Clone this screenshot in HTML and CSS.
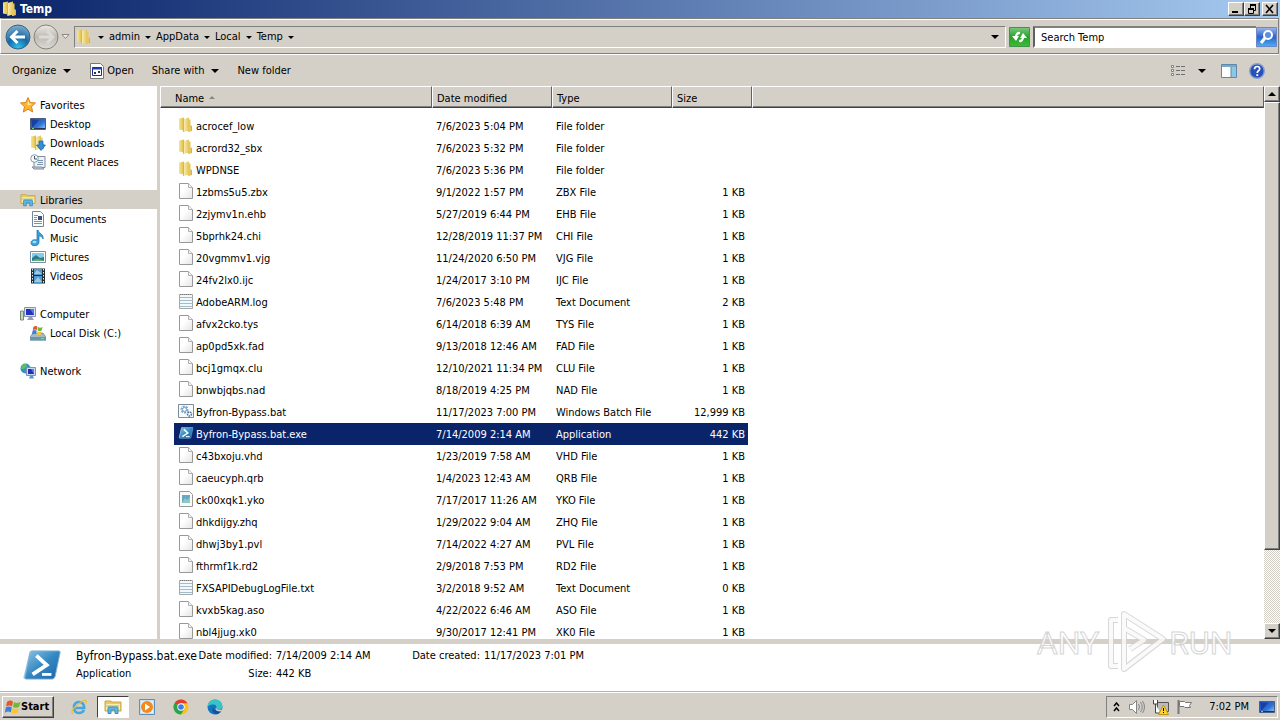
FILE: index.html
```html
<!DOCTYPE html>
<html lang="en">
<head>
    <meta charset="UTF-8">
    <meta name="viewport" content="width=device-width, initial-scale=1.0">
    <title>Temp</title>
    <link rel="stylesheet" href="styles.css">
</head>
<body>
    <!-- shared icons -->
    <svg class="sprite" width="0" height="0">
        <defs>
            <linearGradient id="gold" x1="0" x2="1"><stop offset="0" stop-color="#f6e58f"/><stop offset="1" stop-color="#e0bb4a"/></linearGradient>
            <linearGradient id="goldFront" x1="0" x2="1"><stop offset="0" stop-color="#fbf0b4"/><stop offset="1" stop-color="#e3c257"/></linearGradient>
            <linearGradient id="paper" x1="0" y1="0" x2="1" y2="1"><stop offset="0.4" stop-color="#fff"/><stop offset="1" stop-color="#e4e4e4"/></linearGradient>
            <linearGradient id="screen" x1="0" y1="0" x2="1" y2="1"><stop offset="0" stop-color="#1a3fae"/><stop offset="0.6" stop-color="#2f74d8"/><stop offset="1" stop-color="#9cd4f5"/></linearGradient>
            <linearGradient id="shell" x1="0" y1="0" x2="1" y2="1"><stop offset="0" stop-color="#8fc6e6"/><stop offset="0.5" stop-color="#3488c2"/><stop offset="1" stop-color="#1c66a8"/></linearGradient>
            <linearGradient id="green" x1="0" y1="0" x2="0" y2="1"><stop offset="0" stop-color="#7cc87c"/><stop offset="0.5" stop-color="#26a12c"/><stop offset="1" stop-color="#3fbd35"/></linearGradient>
            <linearGradient id="blue" x1="0" y1="0" x2="0" y2="1"><stop offset="0" stop-color="#9fb6e8"/><stop offset="0.5" stop-color="#2c62d0"/><stop offset="1" stop-color="#45b4f2"/></linearGradient>
            <radialGradient id="backBall" cx="0.5" cy="0.95" r="0.9"><stop offset="0" stop-color="#33c3ea"/><stop offset="0.5" stop-color="#1469a8"/><stop offset="1" stop-color="#7aa7c9"/></radialGradient>
            <linearGradient id="forwardBall" x1="0" y1="0" x2="0" y2="1"><stop offset="0" stop-color="#eceae6"/><stop offset="0.5" stop-color="#bdbab4"/><stop offset="1" stop-color="#dedbd5"/></linearGradient>
        </defs>
        <symbol id="folder" viewBox="0 0 16 16">
            <path d="M1 1.500l5-1v13l-5-1z" fill="url(#gold)"/>
            <path d="M10 2.500h2.500V8l1.500 1v5l-3 1h-1z" fill="#e6c75f"/>
            <path d="M5.500 2L11 .5v13L5.500 15z" fill="url(#goldFront)"/>
            <path d="M5.500 2v13M13.500 9v5" stroke="#d3ac40" stroke-width=".8"/>
        </symbol>
        <symbol id="file" viewBox="0 0 16 16">
            <path d="M1.500.5h9l4 4v11h-13z" fill="url(#paper)" stroke="#989898"/>
            <path d="M10.500.5v4h4" fill="#f4f4f4" stroke="#b0b0b0"/>
        </symbol>
        <symbol id="text" viewBox="0 0 16 16">
            <path d="M1.500 1.500h13v14h-13z" fill="#f4f8fa" stroke="#a4a9ac"/>
            <path d="M2 4.500h12M2 7.500h12M2 10.500h12M2 13.500h12" stroke="#a3bccb"/>
            <path d="M2 1.500h12" stroke="#777" stroke-dasharray="1 1"/>
        </symbol>
        <symbol id="batch" viewBox="0 0 16 16">
            <path d="M.5 1.500h15v13H.5z" fill="#f8fbfd" stroke="#7d8b99"/>
            <circle cx="6.500" cy="6.500" r="3" fill="none" stroke="#7ba6c8" stroke-width="2" stroke-dasharray="2 1"/>
            <circle cx="6.500" cy="6.500" r="2" fill="#fff" stroke="#6ba0c6"/>
            <circle cx="11.500" cy="11" r="2" fill="#fff" stroke="#476f97" stroke-width="1.500" stroke-dasharray="1.500 .7"/>
        </symbol>
        <symbol id="image-file" viewBox="0 0 16 16">
            <path d="M1.500.5h10l3 3v12h-13z" fill="#fafafa" stroke="#989898"/>
            <path d="M4 4h8v8H4z" fill="#68a8c0"/>
            <path d="M4 12l3-5 2 2 3-3v6z" fill="#8bc9c2"/>
        </symbol>
        <symbol id="powershell" viewBox="0 0 44 34">
            <path d="M9 2h32l-7 29H2z" fill="#a9cde3"/>
            <path d="M11 2h29q2 0 1 3l-5 24q-1 3-3 3H5q-2 0-1-3l5-24q1-3 2-3z" fill="url(#shell)" stroke="#84b4d2"/>
            <path d="M16 7l11 10-15 10" fill="none" stroke="#fff" stroke-width="4"/>
            <path d="M22 27h10" stroke="#fff" stroke-width="3"/>
        </symbol>
        <symbol id="star" viewBox="0 0 16 16">
            <path d="M8 .5l2.200 5 5.300.5-4 3.600 1.200 5.400L8 12.200 3.300 15l1.200-5.400L.5 6l5.300-.5z" fill="#ffb52a" stroke="#d98222"/>
            <path d="M8 3l1.200 3.500 3.300.4-5 1.600z" fill="#ffe9a0"/>
        </symbol>
        <symbol id="desktop" viewBox="0 0 16 16">
            <path d="M.5 2.500h15v11H.5z" fill="url(#screen)" stroke="#4c5d80"/>
            <path d="M2 4h7L3 11H2z" fill="#1c3e9e"/>
            <path d="M1 12.500h14" stroke="#26354f"/>
            <path d="M2 12.500h2" stroke="#72d36b"/>
        </symbol>
        <symbol id="download" viewBox="0 0 16 16">
            <use href="#folder"/>
            <path d="M9 6h4v4h2.500L11 15.500 6.500 10H9z" fill="#2e8ee0" stroke="#1761aa" stroke-width=".7"/>
        </symbol>
        <symbol id="recent" viewBox="0 0 16 16">
            <path d="M5 2.500h10v11H4V6" fill="#eef2f6" stroke="#7f8b98"/>
            <path d="M2 13h10l2 2H4z" fill="#c7d0da" stroke="#7f8b98"/>
            <path d="M8 6.500h5M8 8.500h5M7 10.500h6" stroke="#7995b2"/>
            <circle cx="4.500" cy="4.500" r="3.800" fill="#f5fafd" stroke="#7e9db8"/>
            <path d="M4.500 2v3H7" fill="none" stroke="#456"/>
        </symbol>
        <symbol id="libraries" viewBox="0 0 18 16">
            <path d="M1 4V2h6l1 1h9v9H1z" fill="#e8cb65" stroke="#cda544"/>
            <path d="M2 5h14v6H2z" fill="#fbefae"/>
            <path d="M2 7h13" stroke="#90bd76"/>
            <path d="M4 14.500V9q0-1 1-1h8q1 0 1 1v5.500h-3V11H7v3.500z" fill="#62b6e6" stroke="#3a8fc4"/>
        </symbol>
        <symbol id="document" viewBox="0 0 16 16">
            <path d="M2.500.5h8l3 3v12h-11z" fill="#fff" stroke="#73879b"/>
            <path d="M4 4.500h4M4 6.500h3M4 8.500h3M4 10.500h8M4 12.500h8" stroke="#7196b7"/>
            <path d="M8 5h4v4H8z" fill="#31567a"/>
        </symbol>
        <symbol id="music" viewBox="0 0 16 16">
            <path d="M8 0c1 4 6 4 5 9-1-3-3-3-4-3v6c0 5-8 5-8 1 0-3 3-4 6-3V0z" fill="#36a2dd" stroke="#1c6ea9" stroke-width=".7"/>
            <ellipse cx="4.500" cy="12" rx="2" ry="1.300" fill="#a0def9"/>
        </symbol>
        <symbol id="picture" viewBox="0 0 16 16">
            <path d="M.5 2.500h15v11H.5z" fill="#fff" stroke="#7290a8"/>
            <path d="M2 4h12v8H2z" fill="#86cbe8"/>
            <path d="M2 9l4-3 4 3 4-1v4H2z" fill="#2c7c8c"/>
            <path d="M2 12c4-3 8-2 12 0z" fill="#6cae68"/>
        </symbol>
        <symbol id="video" viewBox="0 0 16 16">
            <path d="M1 .5h14v15H1z" fill="#222c33"/>
            <path d="M4 1h8v6H4zM4 8h8v7H4z" fill="#4e9cd2"/>
            <path d="M4 6l3-4 5 4zM4 14l4-5 4 5z" fill="#a4c7d9"/>
            <path d="M2.500 1v14M13.500 1v14" stroke="#eee" stroke-dasharray="1.500 1.500"/>
        </symbol>
        <symbol id="computer" viewBox="0 0 16 16">
            <path d="M.5 5h3v9h-3z" fill="#c9d5bb" stroke="#738a70"/>
            <path d="M4.500 1.500h11v9h-11z" fill="#dce1eb" stroke="#8892ad"/>
            <path d="M6 3h8v6H6z" fill="#2132bd"/>
            <path d="M10 3h4v6z" fill="#4d7ee8"/>
            <path d="M9 11h3l2 3H7z" fill="#939fb0"/>
        </symbol>
        <symbol id="winflag" viewBox="0 0 16 16">
            <path d="M2 3c2-2 4-2 6-.5L7 7.500c-2-1.500-4-1-6 0z" fill="#e8562a"/>
            <path d="M9 3c2 1.500 4 1 6.500 0L14 8c-2 1-4 1-6 0z" fill="#6eb83b"/>
            <path d="M.8 8.500c2-1.500 4-1.500 6 0l-1 5c-2-1.500-4-1-6 .5z" fill="#3a80d8"/>
            <path d="M7.700 9c2 1.500 4 1 6 0l-1.200 5c-2 1-4 1-6-.5z" fill="#fcc52b"/>
        </symbol>
        <symbol id="disk" viewBox="0 0 16 16">
            <path d="M3 8h10l3 4v3H0v-3z" fill="#a8b9c2" stroke="#6f8490" stroke-width=".7"/>
            <path d="M0 12h16v3.500H0z" fill="#6698ad"/>
            <path d="M11 13.500h3" stroke="#7fe474"/>
            <use href="#winflag" x="2" y="0" width="11" height="11"/>
        </symbol>
        <symbol id="network" viewBox="0 0 16 16">
            <circle cx="5.500" cy="5.500" r="5" fill="#2c93c5"/>
            <path d="M2 2c3-2 5-1 5 1L4 6 1 6zM5 8l3-1v3z" fill="#64bd60"/>
            <path d="M6.500 4.500h9v8h-9z" fill="#cdd6ea" stroke="#8190b0"/>
            <path d="M8 6h6v5H8z" fill="#1c31bd"/>
            <path d="M11 6h3v5z" fill="#4d82ec"/>
            <path d="M10 13h3l1 2.500H9z" fill="#5b95cf"/>
        </symbol>
    </svg>

    <header class="titlebar">
        <svg class="icon"><use href="#folder"/></svg>
        <h1>Temp</h1>
        <div class="window-buttons">
            <button aria-label="Minimize"><svg width="12" height="10"><path d="M2 8h6" stroke="#000" stroke-width="2"/></svg></button>
            <button aria-label="Restore"><svg width="12" height="10"><path d="M4 1h6M2 5h6" stroke="#000" stroke-width="2"/><path d="M4.500 2v2M9.500 2v4.500H8M2.500 5v4.500h5V5" fill="none" stroke="#000"/></svg></button>
            <button class="close" aria-label="Close"><svg width="12" height="10"><path d="M2 1l7 8M9 1L2 9" stroke="#000" stroke-width="1.600"/></svg></button>
        </div>
    </header>

    <nav class="address-row">
        <button class="round" aria-label="Back"><svg width="26" height="26"><circle cx="13" cy="13" r="12" fill="url(#backBall)" stroke="#31658c"/><path d="M20 13H7M12.500 7l-6 6 6 6" fill="none" stroke="#fff" stroke-width="3"/></svg></button>
        <button class="round" aria-label="Forward"><svg width="26" height="26"><circle cx="13" cy="13" r="12" fill="url(#forwardBall)" stroke="#85827c"/><path d="M6 13h13M14 7l6 6-6 6" fill="none" stroke="#dddad5" stroke-width="3"/></svg></button>
        <button class="history" aria-label="Recent pages"><svg width="9" height="6"><path d="M1 .5h7L4.500 4.500z" fill="#eee" stroke="#8b8881"/></svg></button>
        <div class="address">
            <svg class="icon"><use href="#folder"/></svg>
            <i class="arrow"></i>
            <a href="#">admin</a><i class="arrow"></i>
            <a href="#">AppData</a><i class="arrow"></i>
            <a href="#">Local</a><i class="arrow"></i>
            <a href="#">Temp</a><i class="arrow"></i>
            <i class="arrow big last"></i>
        </div>
        <button class="square" aria-label="Refresh"><svg width="21" height="20"><path d="M.5.5h20v19H.5z" fill="url(#green)" stroke="#45904a"/><path d="M11 5q-4-1-5 4H3l4 5 3-5H8q1-2 3-2zM10 15q4 1 5-4h3l-4-5-3 5h2q-1 2-3 2z" fill="#fff"/></svg></button>
        <div class="search">
            <input type="text" aria-label="Search Temp" placeholder="Search Temp">
            <button class="square" aria-label="Search"><svg width="21" height="20"><path d="M.5.5h20v19H.5z" fill="url(#blue)" stroke="#6c87c7"/><circle cx="12" cy="8" r="4" fill="#5c8fe0" stroke="#fff" stroke-width="2"/><path d="M9 11l-4 5" stroke="#fff" stroke-width="3"/></svg></button>
        </div>
    </nav>

    <div class="toolbar">
        <button class="menu">Organize <i class="arrow big"></i></button>
        <button class="open"><svg class="icon" viewBox="0 0 16 16"><path d="M1.500.5h10l3 3v12h-13z" fill="#fff" stroke="#777"/><path d="M3.500 4.500h9v8h-9z" fill="#fff" stroke="#1c2f80"/><path d="M3 5.500h10" stroke="#1c3fae" stroke-width="2"/><path d="M5 9h2v2H5zM9 8h2v2H9z" fill="#335"/></svg>Open</button>
        <button class="menu">Share with <i class="arrow big"></i></button>
        <button>New folder</button>
        <div class="toolbar-right">
            <button class="menu" aria-label="Change your view"><svg class="icon" viewBox="0 0 16 16"><path d="M1.500 2.500h2v2h-2zM1.500 6.500h2v2h-2zM1.500 10.500h2v2h-2z" fill="#fff" stroke="#808080"/><path d="M6 3.500h10M6 7.500h10M6 11.500h10" stroke="#6f6f6f" stroke-dasharray="4 1"/></svg><i class="arrow big"></i></button>
            <button aria-label="Show the preview pane"><svg class="icon" viewBox="0 0 16 16"><path d="M.5 1.500h15v13H.5z" fill="#fff" stroke="#5e88a6"/><path d="M1 3h14" stroke="#79a9c9" stroke-width="2"/><path d="M10 4h5v10h-5z" fill="#8cc8e6"/><path d="M10 4v10" stroke="#5e88a6"/></svg></button>
            <button aria-label="Get help"><svg class="icon" viewBox="0 0 16 16"><circle cx="8" cy="8" r="7.300" fill="#2750b8" stroke="#8aa0cd" stroke-width="1.400"/><path d="M5.500 6.200q0-2.700 2.600-2.700t2.600 2.300q0 1.200-1.200 2T8.200 10" fill="none" stroke="#fff" stroke-width="1.700"/><path d="M7.300 11.200h1.900V13H7.300z" fill="#fff"/></svg></button>
        </div>
    </div>

    <main class="explorer">
        <aside class="sidebar">
            <ul>
                <li><svg class="icon"><use href="#star"/></svg><a href="#">Favorites</a></li>
                <li class="sub"><svg class="icon"><use href="#desktop"/></svg><a href="#">Desktop</a></li>
                <li class="sub"><svg class="icon"><use href="#download"/></svg><a href="#">Downloads</a></li>
                <li class="sub"><svg class="icon"><use href="#recent"/></svg><a href="#">Recent Places</a></li>
            </ul>
            <ul>
                <li class="current"><svg class="icon"><use href="#libraries"/></svg><a href="#">Libraries</a></li>
                <li class="sub"><svg class="icon"><use href="#document"/></svg><a href="#">Documents</a></li>
                <li class="sub"><svg class="icon"><use href="#music"/></svg><a href="#">Music</a></li>
                <li class="sub"><svg class="icon"><use href="#picture"/></svg><a href="#">Pictures</a></li>
                <li class="sub"><svg class="icon"><use href="#video"/></svg><a href="#">Videos</a></li>
            </ul>
            <ul>
                <li><svg class="icon"><use href="#computer"/></svg><a href="#">Computer</a></li>
                <li class="sub"><svg class="icon"><use href="#disk"/></svg><a href="#">Local Disk (C:)</a></li>
            </ul>
            <ul>
                <li><svg class="icon"><use href="#network"/></svg><a href="#">Network</a></li>
            </ul>
        </aside>

        <section class="files">
            <table>
                <thead>
                    <tr><th class="name">Name <i class="sort"></i></th><th class="date">Date modified</th><th class="type">Type</th><th class="size">Size</th><th></th></tr>
                </thead>
                <tbody>
                    <tr><td><svg class="icon"><use href="#folder"/></svg>acrocef_low</td><td>7/6/2023 5:04 PM</td><td>File folder</td><td></td></tr>
                    <tr><td><svg class="icon"><use href="#folder"/></svg>acrord32_sbx</td><td>7/6/2023 5:32 PM</td><td>File folder</td><td></td></tr>
                    <tr><td><svg class="icon"><use href="#folder"/></svg>WPDNSE</td><td>7/6/2023 5:36 PM</td><td>File folder</td><td></td></tr>
                    <tr><td><svg class="icon"><use href="#file"/></svg>1zbms5u5.zbx</td><td>9/1/2022 1:57 PM</td><td>ZBX File</td><td>1 KB</td></tr>
                    <tr><td><svg class="icon"><use href="#file"/></svg>2zjymv1n.ehb</td><td>5/27/2019 6:44 PM</td><td>EHB File</td><td>1 KB</td></tr>
                    <tr><td><svg class="icon"><use href="#file"/></svg>5bprhk24.chi</td><td>12/28/2019 11:37 PM</td><td>CHI File</td><td>1 KB</td></tr>
                    <tr><td><svg class="icon"><use href="#file"/></svg>20vgmmv1.vjg</td><td>11/24/2020 6:50 PM</td><td>VJG File</td><td>1 KB</td></tr>
                    <tr><td><svg class="icon"><use href="#file"/></svg>24fv2lx0.ijc</td><td>1/24/2017 3:10 PM</td><td>IJC File</td><td>1 KB</td></tr>
                    <tr><td><svg class="icon"><use href="#text"/></svg>AdobeARM.log</td><td>7/6/2023 5:48 PM</td><td>Text Document</td><td>2 KB</td></tr>
                    <tr><td><svg class="icon"><use href="#file"/></svg>afvx2cko.tys</td><td>6/14/2018 6:39 AM</td><td>TYS File</td><td>1 KB</td></tr>
                    <tr><td><svg class="icon"><use href="#file"/></svg>ap0pd5xk.fad</td><td>9/13/2018 12:46 AM</td><td>FAD File</td><td>1 KB</td></tr>
                    <tr><td><svg class="icon"><use href="#file"/></svg>bcj1gmqx.clu</td><td>12/10/2021 11:34 PM</td><td>CLU File</td><td>1 KB</td></tr>
                    <tr><td><svg class="icon"><use href="#file"/></svg>bnwbjqbs.nad</td><td>8/18/2019 4:25 PM</td><td>NAD File</td><td>1 KB</td></tr>
                    <tr><td><svg class="icon"><use href="#batch"/></svg>Byfron-Bypass.bat</td><td>11/17/2023 7:00 PM</td><td>Windows Batch File</td><td>12,999 KB</td></tr>
                    <tr class="selected"><td><svg class="icon"><use href="#powershell"/></svg>Byfron-Bypass.bat.exe</td><td>7/14/2009 2:14 AM</td><td>Application</td><td>442 KB</td></tr>
                    <tr><td><svg class="icon"><use href="#file"/></svg>c43bxoju.vhd</td><td>1/23/2019 7:58 AM</td><td>VHD File</td><td>1 KB</td></tr>
                    <tr><td><svg class="icon"><use href="#file"/></svg>caeucyph.qrb</td><td>1/4/2023 12:43 AM</td><td>QRB File</td><td>1 KB</td></tr>
                    <tr><td><svg class="icon"><use href="#image-file"/></svg>ck00xqk1.yko</td><td>7/17/2017 11:26 AM</td><td>YKO File</td><td>1 KB</td></tr>
                    <tr><td><svg class="icon"><use href="#file"/></svg>dhkdijgy.zhq</td><td>1/29/2022 9:04 AM</td><td>ZHQ File</td><td>1 KB</td></tr>
                    <tr><td><svg class="icon"><use href="#file"/></svg>dhwj3by1.pvl</td><td>7/14/2022 4:27 AM</td><td>PVL File</td><td>1 KB</td></tr>
                    <tr><td><svg class="icon"><use href="#file"/></svg>fthrmf1k.rd2</td><td>2/9/2018 7:53 PM</td><td>RD2 File</td><td>1 KB</td></tr>
                    <tr><td><svg class="icon"><use href="#text"/></svg>FXSAPIDebugLogFile.txt</td><td>3/2/2018 9:52 AM</td><td>Text Document</td><td>0 KB</td></tr>
                    <tr><td><svg class="icon"><use href="#file"/></svg>kvxb5kag.aso</td><td>4/22/2022 6:46 AM</td><td>ASO File</td><td>1 KB</td></tr>
                    <tr><td><svg class="icon"><use href="#file"/></svg>nbl4jjug.xk0</td><td>9/30/2017 12:41 PM</td><td>XK0 File</td><td>1 KB</td></tr>
                </tbody>
            </table>
        </section>

        <div class="scrollbar">
            <button aria-label="Scroll up"><i class="arrow big up"></i></button>
            <div class="thumb"></div>
            <div class="track"></div>
            <button aria-label="Scroll down"><i class="arrow big"></i></button>
        </div>
    </main>

    <footer class="details">
        <svg class="preview"><use href="#powershell"/></svg>
        <div class="facts">
            <strong>Byfron-Bypass.bat.exe</strong><span class="label">Date modified:</span><span>7/14/2009 2:14 AM</span><span class="label">Date created:</span><span>11/17/2023 7:01 PM</span>
            <span>Application</span><span class="label">Size:</span><span>442 KB</span>
        </div>
        <svg class="watermark" width="210" height="80" viewBox="0 0 210 80">
            <g fill="#fff" stroke="#cfcfcf">
                <text x="38" y="53" text-anchor="middle">ANY</text>
                <text x="171" y="53" text-anchor="middle">RUN</text>
            </g>
            <g fill="none" stroke-linejoin="round">
                <path d="M88 19h-7v46h7M94 13l39 25-39 30zM94 68V27l20 12-14 9" stroke="#d2d2d2" stroke-width="6"/>
                <path d="M88 19h-7v46h7M94 13l39 25-39 30zM94 68V27l20 12-14 9" stroke="#fafafa" stroke-width="4"/>
            </g>
        </svg>
    </footer>

    <div class="taskbar">
        <button class="start"><svg class="icon"><use href="#winflag"/></svg>Start</button>
        <div class="apps">
            <button aria-label="Internet Explorer"><svg class="icon" viewBox="0 0 16 16"><path d="M13 11q-1.500 3-5 3-5 0-5-5.500T8 3q5 0 5.200 6H4.500" fill="none" stroke="#43a7e2" stroke-width="2.600"/><path d="M2 15q-3-2 2-7t9-6.500q3-1 2 2.500" fill="none" stroke="#eebb3a" stroke-width="1.300"/></svg></button>
            <button class="active" aria-label="Windows Explorer"><svg class="icon"><use href="#libraries"/></svg></button>
            <button aria-label="Windows Media Player"><svg class="icon" viewBox="0 0 16 16"><path d="M.5.5h15v15H.5z" fill="#c6e1f3" stroke="#5d91bd"/><path d="M2 2h12v12H2z" fill="#e4effa"/><circle cx="8" cy="8" r="6" fill="#f28a1e"/><path d="M6 4.500l5 3.500-5 3.500z" fill="#fff"/></svg></button>
            <button aria-label="Google Chrome"><svg class="icon" viewBox="0 0 16 16"><circle cx="8" cy="8" r="7.500" fill="#fbc116"/><path d="M8 8L1.500 4.200A7.500 7.500 0 0 1 14.500 4.300H8z" fill="#e33b2e"/><path d="M8 8L1.500 4.200A7.500 7.500 0 0 0 8 15.500l3.200-5.600z" fill="#2ba24c"/><circle cx="8" cy="8" r="3.700" fill="#fff"/><circle cx="8" cy="8" r="2.800" fill="#3b7ded"/></svg></button>
            <button aria-label="Microsoft Edge"><svg class="icon" viewBox="0 0 16 16"><circle cx="8" cy="8" r="7.500" fill="#1473c4"/><path d="M.5 8Q1 .5 8 .5t7.500 7q0 3-4 3-3 0-2-2 0-3-3-3Q2 5 .5 8z" fill="#38c3c5"/><path d="M6 8q-2 5 3 7.300Q13 15 14.800 11 8 14 6 8z" fill="#174f9c"/><path d="M9.500 8.500q-1 3 5 2l1 1-2 1q-5 0-5-3z" fill="#d4d0c8"/></svg></button>
        </div>
        <div class="tray">
            <button aria-label="Show hidden icons"><svg width="8" height="10"><path d="M1 4l2.500-3L6 4M1 9l2.500-3L6 9" fill="none" stroke="#000" stroke-width="1.500"/></svg></button>
            <svg class="icon" viewBox="0 0 16 16"><path d="M.5 5.500h3l4-4v13l-4-4h-3z" fill="#fff" stroke="#858585"/><path d="M9.500 5q2 3 0 6M11.500 3q3.500 5 0 10M13.500 2q4 6 0 12" fill="none" stroke="#858585"/></svg>
            <svg class="icon" viewBox="0 0 16 16"><path d="M4.500 3.500h11v9h-11z" fill="#bbb" stroke="#555"/><path d="M.5 1v4h4V1M2.500 5v9h5" fill="#fff" stroke="#444"/><path d="M10.500 6l5 9.500h-10z" fill="#ffd52c" stroke="#bd971b"/><path d="M10.500 9v3M10.500 13v1" stroke="#000"/></svg>
            <svg class="icon" viewBox="0 0 16 16"><path d="M1.500 1v14" stroke="#777" stroke-width="2"/><path d="M2.500 2.500h5l1 1h6l-2 3 1 2H8l-1-1H2.500z" fill="#fff" stroke="#777"/></svg>
            <time>7:02 PM</time>
            <svg class="icon"><use href="#desktop"/></svg>
        </div>
    </div>
</body>
</html>
```
FILE: styles.css
```css
*{
  box-sizing: border-box;
}
body{
  margin: 0;
  height: 100vh;
  display: flex;
  flex-direction: column;
  overflow: hidden;
  background: #d4d0c8;
  color: #000;
  font: 11px/14px "DejaVu Sans Condensed", Tahoma, sans-serif;
}
.sprite{
  position: absolute;
}
button{
  font: inherit;
  color: inherit;
  background: none;
  border: none;
  padding: 0;
  display: flex;
  align-items: center;
}
a{
  color: inherit;
  text-decoration: none;
}
ul{
  list-style: none;
  margin: 0;
  padding: 0;
}
.icon{
  width: 16px;
  height: 16px;
  flex: none;
}
.arrow{
  border: 3px solid transparent;
  border-top-color: #000;
  border-bottom: none;
}
.arrow.big{
  border-width: 4px;
  border-bottom: none;
}
.arrow.up{
  border: 4px solid transparent;
  border-top: none;
  border-bottom-color: #000;
}

/* title */
.titlebar{
  display: flex;
  align-items: center;
  gap: 2px;
  height: 18px;
  padding: 0 2px;
  background: linear-gradient(to right, #0a246a, #a6caf0);
  color: #fff;
}
.titlebar h1{
  margin: 0;
  font-size: 12px;
}
.window-buttons{
  display: flex;
  margin-left: auto;
}
.window-buttons button, .scrollbar button, .thumb, .start{
  background: #d4d0c8;
  border: 1px solid;
  border-color: #fff #404040 #404040 #fff;
  box-shadow: inset -1px -1px #808080;
  justify-content: center;
}
.window-buttons button{
  width: 16px;
  height: 14px;
}
.window-buttons .close{
  margin-left: 2px;
}

/* address */
.address-row{
  display: flex;
  align-items: center;
  height: 36px;
  margin-right: 1px;
  padding: 2px 1px 0 4px;
  border: 1px solid #808080;
  border-left-color: #fff;
  box-shadow: inset 0 1px #fff, 0 1px #fff;
}
.round{
  margin-right: 2px;
}
.history{
  margin-right: 4px;
}
.address{
  flex: 1;
  display: flex;
  align-items: center;
  gap: 5px;
  height: 22px;
  padding: 0 6px 0 1px;
  border: 1px solid #808080;
  border-color: #808080 #fff #fff #808080;
}
.address .icon{
  margin-right: 1px;
}
.address .last{
  margin-left: auto;
}
.square{
  margin: 0 3px;
}
.search{
  display: flex;
  align-items: center;
  width: 244px;
}
.search input{
  flex: 1;
  min-width: 0;
  height: 22px;
  padding: 0 6px;
  border: 2px solid;
  border-color: #808080 #fff #fff #606060;
  border-right: none;
  border-radius: 0;
  background: #fff;
  font: inherit;
}
.search input::placeholder{
  color: #000;
}
.search .square{
  margin: 0;
}

/* commands */
.toolbar{
  display: flex;
  align-items: center;
  gap: 18px;
  height: 32px;
  padding: 1px 15px 0 12px;
}
.toolbar .menu{
  gap: 7px;
}
.open{
  gap: 2px;
}
.toolbar-right{
  display: flex;
  align-items: center;
  gap: 12px;
  margin-left: auto;
}
.toolbar-right .menu{
  gap: 12px;
}
.toolbar-right .menu + button{
  margin-left: 3px;
}

/* panes */
.explorer{
  flex: 1;
  min-height: 0;
  display: flex;
}
.sidebar{
  width: 160px;
  padding-top: 9px;
  background: #fff;
  border-right: 3px solid #d4d0c8;
}
.sidebar ul{
  margin-bottom: 19px;
}
.sidebar li{
  display: flex;
  align-items: center;
  gap: 4px;
  height: 19px;
  padding-left: 20px;
}
.sidebar .sub{
  padding-left: 30px;
}
.sidebar a{
  padding-top: 2px;
}
.current{
  background: #d4d0c8;
}
.files{
  flex: 1;
  overflow: hidden;
  background: #fff;
}
table{
  width: 100%;
  table-layout: fixed;
  border-spacing: 0;
}
th{
  height: 22px;
  padding: 3px 4px 0;
  background: #d4d0c8;
  border: 1px solid;
  border-color: #fff #606060 #404040 #fff;
  box-shadow: inset 0 -1px #808080;
  font-weight: normal;
  text-align: left;
}
.name{
  width: 272px;
  padding-left: 14px;
}
.date, .type{
  width: 120px;
}
.size{
  width: 80px;
}
.sort{
  display: inline-block;
  margin-left: 2px;
  border: 3px solid transparent;
  border-top: none;
  border-bottom-color: #8a877f;
  vertical-align: 3px;
}
tbody::before{
  content: "";
  display: table-row;
  height: 7px;
}
td{
  height: 22px;
  padding: 2px 4px 0;
  vertical-align: baseline;
  white-space: nowrap;
}
td:first-child{
  border-left: 14px solid #fff;
}
td .icon{
  margin-right: 2px;
  vertical-align: -3px;
}
td:nth-child(4){
  padding-right: 3px;
  border-right: 4px solid #fff;
  text-align: right;
}
.selected td{
  background: #0a246a;
  color: #fff;
}
.scrollbar{
  display: flex;
  flex-direction: column;
  width: 16px;
}
.scrollbar button{
  height: 16px;
}
.thumb{
  flex: 448;
}
.track{
  flex: 73;
  background: repeating-conic-gradient(#fff 0 25%, #d4d0c8 0 50%) 0 0 / 2px 2px;
}

/* details */
.details{
  position: relative;
  display: flex;
  align-items: flex-start;
  gap: 12px;
  height: 53px;
  padding: 5px 20px;
  background: #fff;
  border-top: 5px solid #d4d0c8;
  border-bottom: 1px solid #b8b5ae;
}
.preview{
  width: 44px;
  height: 32px;
}
.facts{
  display: grid;
  grid-template-columns: 122px 78px 132px 76px auto;
  row-gap: 4px;
  white-space: nowrap;
}
.facts strong{
  font-size: 12px;
  font-weight: normal;
}
.label{
  padding-right: 4px;
  text-align: right;
}
.watermark{
  position: absolute;
  right: 40px;
  bottom: 10px;
  font: 32px Roboto, sans-serif;
  opacity: 0.85;
}

/* taskbar */
.taskbar{
  display: flex;
  align-items: center;
  height: 28px;
  padding: 2px;
  border-top: 1px solid #fff;
}
.start{
  height: 22px;
  padding: 0 4px 0 2px;
  font-weight: bold;
}
.apps{
  display: flex;
  gap: 2px;
  margin-left: 9px;
}
.apps button{
  width: 32px;
  height: 22px;
  justify-content: center;
}
.apps .active{
  background: #fff;
  border: 1px solid;
  border-color: #404040 #fff #fff #404040;
}
.apps .active .icon{
  width: 18px;
}
.tray{
  display: flex;
  align-items: center;
  gap: 8px;
  height: 22px;
  margin-left: auto;
  padding: 0 2px 0 6px;
  border: 1px solid;
  border-color: #808080 #fff #fff #808080;
}
.tray time{
  margin: 0 2px 0 8px;
}
```
